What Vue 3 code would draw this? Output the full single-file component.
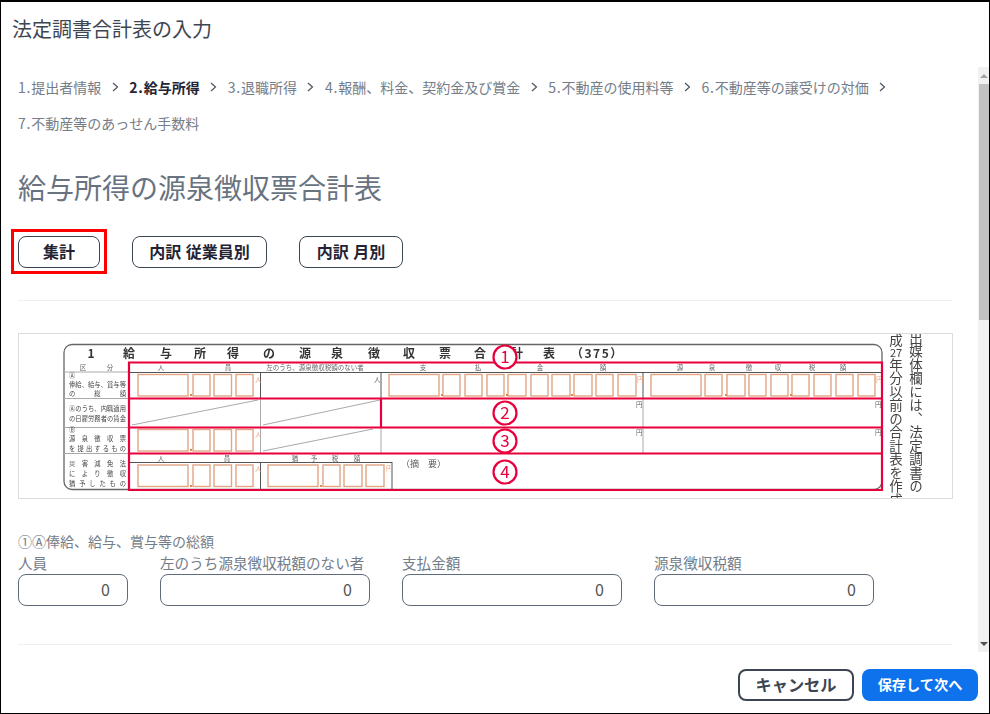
<script setup>
const crumbs = [
  { no: '1.', label: '提出者情報' },
  { no: '2.', label: '給与所得', active: true },
  { no: '3.', label: '退職所得' },
  { no: '4.', label: '報酬、料金、契約金及び賞金' },
  { no: '5.', label: '不動産の使用料等' },
  { no: '6.', label: '不動産等の譲受けの対価' },
  { no: '7.', label: '不動産等のあっせん手数料', last: true }
]
const fields = [
  { label: '人員', size: 'f-s' },
  { label: '左のうち源泉徴収税額のない者', size: 'f-m' },
  { label: '支払金額', size: 'f-l' },
  { label: '源泉徴収税額', size: 'f-l' }
]
const people = [[138, 50], [193, 17], [214, 17.5], [236, 17]]
const pay = [[389, 50], [443, 17], [465, 17], [487, 17], [508, 18], [531, 17], [552, 18], [574, 18], [596, 17], [618, 18]]
const tax = [[651, 50], [705, 17], [727, 18], [749, 17], [771, 17], [792, 17], [814, 17], [836, 17], [858, 17]]
const delay = [[268, 50], [323, 17], [344, 18], [366, 18]]
const boxes = [
  ...people.map(([x, w]) => ({ x, w, y: 374.5, h: 21.5 })),
  ...pay.map(([x, w]) => ({ x, w, y: 374.5, h: 21.5 })),
  ...tax.map(([x, w]) => ({ x, w, y: 374.5, h: 21.5 })),
  ...people.map(([x, w]) => ({ x, w, y: 429.5, h: 21.5 })),
  ...people.map(([x, w]) => ({ x, w, y: 465, h: 21.5 })),
  ...delay.map(([x, w]) => ({ x, w, y: 465, h: 21.5 }))
]
const ticks = [[190, 394], [190, 449], [190, 485], [320, 485], [441, 394], [506, 394], [571, 394], [725, 394], [790, 394]]
const small = [
  ['区', 83, 370], ['分', 110, 370], ['人', 161, 370], ['員', 228, 370],
  ['支', 423, 370], ['払', 478, 370], ['金', 540, 370], ['額', 603, 370],
  ['源', 680, 370], ['泉', 712, 370], ['徴', 749, 370], ['収', 778, 370], ['税', 812, 370], ['額', 843, 370],
  ['人', 161, 461], ['員', 227, 461], ['猶', 295, 461], ['予', 314, 461], ['税', 335, 461], ['額', 357, 461]
]
const circles = [['1', 357], ['2', 413], ['3', 441], ['4', 472]]
const heading = [['1', 91], ['給', 129], ['与', 166], ['所', 200], ['得', 233], ['の', 269], ['源', 305], ['泉', 337], ['徴', 374], ['収', 409], ['票', 445], ['合', 480], ['計', 517], ['表', 549]]
const leftLabels = [
  ['Ⓐ', 69, 378, 7],
  ['俸給、給与、賞与等', 69, 387, 57],
  ['の　総　額', 69, 396, 57],
  ['Ⓐのうち、内職適用', 69, 411, 57],
  ['の日雇労務者の賃金', 69, 421, 57],
  ['Ⓑ', 69, 432, 7],
  ['源泉徴収票', 69, 441, 57],
  ['を提出するもの', 69, 451, 57],
  ['災害減免法', 69, 466, 57],
  ['により徴収', 69, 476, 57],
  ['猶予したもの', 69, 486, 57]
]
</script>

<template>
  <div class="dialog">
    <header class="head">法定調書合計表の入力</header>
    <div class="body">
      <main class="content">
        <nav class="crumbs">
          <template v-for="c in crumbs" :key="c.label">
            <span class="crumb" :class="{ active: c.active }"><span class="no">{{ c.no }}</span>{{ c.label }}</span>
            <span v-if="!c.last" class="sep">
              <svg width="7" height="10" viewBox="0 0 7 10"><path d="M1 1l4.500 4L1 9" fill="none" stroke="#4a5563" stroke-width="1.200" /></svg>
            </span>
          </template>
        </nav>
        <h1 class="title">給与所得の源泉徴収票合計表</h1>
        <div class="tools">
          <button class="tool marked">集計</button>
          <button class="tool wide">内訳 従業員別</button>
          <button class="tool mid">内訳 月別</button>
        </div>
        <hr class="rule rule-top" />
        <div class="figure">
          <svg class="form" width="933" height="164" viewBox="19 334 933 164">
            <g class="blurred">
              <rect x="64" y="344.500" width="818" height="145" rx="8" fill="#fff" stroke="#666" stroke-width="1.300" />
              <g stroke="#aaa" stroke-width="1">
                <path d="M64 372H129M64 398.500H129M64 427.500H129M64 453.500H129" />
                <path d="M129 372V490M260.500 398V453M381 398V453M643 398V453" />
                <path d="M132 425L258 400M263 425L380 400M263 451L373 429" />
              </g>
              <g stroke="#555" stroke-width="1" fill="none">
                <path d="M129 372.500H882M129 462.500H392M260.500 372V398M381 372V398M643 372V398M260.500 462V490M392 462V490" />
              </g>
              <rect v-for="(b, i) in boxes" :key="i" :x="b.x" :y="b.y" :width="b.w" :height="b.h" fill="#fff" stroke="#e3a583" stroke-width="1.400" />
              <rect v-for="(t, i) in ticks" :key="'t' + i" :x="t[0]" :y="t[1]" width="2" height="2" fill="#e08a4a" />
              <text v-for="(s, i) in small" :key="'s' + i" class="tiny" :x="s[1]" :y="s[2]" text-anchor="middle">{{ s[0] }}</text>
              <text class="tiny" x="315" y="370" text-anchor="middle">左のうち、源泉徴収税額のない者</text>
              <text class="tiny yen" x="255" y="382">人</text>
              <text class="tiny yen" x="255" y="437">人</text>
              <text class="tiny yen" x="255" y="471">人</text>
              <text class="tiny yen" x="386" y="471">円</text>
              <text class="tiny yen" x="637" y="382">円</text>
              <text class="tiny yen" x="876" y="382">円</text>
              <text class="tiny" x="374" y="382">人</text>
              <text class="tiny" x="636" y="407">円</text>
              <text class="tiny" x="875" y="407">円</text>
              <text class="tiny" x="636" y="435">円</text>
              <text class="tiny" x="875" y="435">円</text>
              <text v-for="(l, i) in leftLabels" :key="'l' + i" class="side" :x="l[1]" :y="l[2]" :textLength="l[3]" lengthAdjust="spacing">{{ l[0] }}</text>
              <text v-for="(h, i) in heading" :key="'h' + i" class="form-title" :x="h[1]" y="358" text-anchor="middle">{{ h[0] }}</text>
              <text class="form-title" x="571" y="358" letter-spacing="1.500">（375）</text>
              <text class="abstract" x="401" y="467">（摘　要）</text>
              <g fill="none" stroke="#e8003d" stroke-width="2.200">
                <path d="M129 362.500H882V490H129ZM129 398.500H882M381 398V427M129 427.500H882M129 453.500H882M129 362V398M129 427V490" />
              </g>
              <g v-for="c in circles" :key="c[0]">
                <circle cx="505" :cy="c[1]" r="11.500" fill="#fff" stroke="#e8003d" stroke-width="2.200" />
                <text class="num" x="505" :y="c[1] + 6" text-anchor="middle">{{ c[0] }}</text>
              </g>
              <text class="vert" x="896" y="345" text-anchor="middle">成</text>
              <text class="vert v-num" x="896" y="357" text-anchor="middle">27</text>
              <text class="vert v-col" x="896" y="358">年分以前の合計表を作成</text>
              <text class="vert v-col" x="916" y="331">出媒体欄には、法定調書の</text>
            </g>
          </svg>
        </div>
        <p class="group">①Ⓐ俸給、給与、賞与等の総額</p>
        <div class="fields">
          <label v-for="f in fields" :key="f.label" class="field" :class="f.size">
            <span class="label">{{ f.label }}</span>
            <span class="input">0</span>
          </label>
        </div>
        <hr class="rule rule-bottom" />
      </main>
      <aside class="scroll">
        <span class="arrow up"></span>
        <span class="thumb"></span>
        <span class="arrow down"></span>
      </aside>
    </div>
    <footer class="foot">
      <button class="cancel">キャンセル</button>
      <button class="save">保存して次へ</button>
    </footer>
  </div>
</template>

<style>
html, body { margin: 0; background: #fff; }
</style>

<style scoped>
.dialog {
  box-sizing: border-box;
  width: 990px;
  height: 714px;
  border: 1px solid #000;
  border-width: 2px 1px 1px 1px;
  display: flex;
  flex-direction: column;
  background: #fff;
  font-family: "Noto Sans CJK JP", "Noto Sans", sans-serif;
  overflow: hidden;
}
.head {
  height: 65px;
  flex: none;
  box-sizing: border-box;
  padding: 13px 0 0 11px;
  font-size: 20px;
  line-height: 28px;
  color: #3d4651;
}
.body {
  flex: none;
  height: 585px;
  display: flex;
}
.content {
  flex: 1;
  min-width: 0;
  box-sizing: border-box;
  padding: 2px 24px 0 17px;
  overflow: hidden;
}
.crumbs {
  display: flex;
  flex-wrap: wrap;
  align-items: center;
}
.crumb {
  font-size: 14px;
  line-height: 36px;
  color: #747d88;
}
.no { letter-spacing: 0.800px; }
.crumb.active {
  font-weight: 700;
  color: #232333;
}
.sep {
  width: 28px;
  display: flex;
  justify-content: center;
}
.title {
  margin: 26px 0 0;
  font-size: 28px;
  font-weight: 400;
  line-height: 40px;
  color: #68737f;
}
.tools {
  display: flex;
  gap: 32px;
  margin-top: 29px;
}
.tool {
  box-sizing: border-box;
  height: 32px;
  width: 82px;
  padding: 0 0 2px;
  background: #fff;
  border: 1px solid #3c4652;
  border-radius: 8px;
  font: 700 16px "Noto Sans CJK JP", sans-serif;
  word-spacing: 1px;
  color: #232333;
  position: relative;
}
.tool.wide { width: 135px; }
.tool.mid { width: 104px; }
.tool.marked::after {
  content: "";
  position: absolute;
  left: -8px;
  top: -8px;
  width: 96px;
  height: 45px;
  box-sizing: border-box;
  border: 3px solid #f00;
}
.rule {
  border: 0;
  height: 1px;
  background: #edeff1;
  margin: 0;
  width: 934px;
}
.rule-top { margin-top: 32px; }
.rule-bottom { margin-top: 38px; }
.figure {
  box-sizing: border-box;
  width: 935px;
  height: 166px;
  margin-top: 32px;
  border: 1px solid #dcdcdc;
  overflow: hidden;
}
.form { display: block; }
.blurred { filter: blur(0.5px); }
.tiny { font-size: 6.500px; fill: #666; }
.yen { fill: #e3a583; }
.side { font-size: 6.300px; fill: #444; }
.form-title { font-size: 12px; font-weight: 700; fill: #333; }
.abstract { font-size: 9px; fill: #555; }
.num { font-size: 17px; fill: #e8003d; }
.vert { font-size: 13.500px; fill: #444; }
.v-num { font-size: 11px; }
.v-col { writing-mode: vertical-rl; }
.group {
  margin: 33px 0 0;
  font-size: 14px;
  line-height: 18px;
  color: #747d88;
}
.fields {
  display: flex;
  gap: 32px;
  margin-top: 4px;
}
.field { display: block; }
.f-s { width: 110px; }
.f-m { width: 210px; }
.f-l { width: 220px; }
.label {
  display: block;
  font-size: 14.600px;
  line-height: 18px;
  padding-bottom: 2px;
  color: #747d88;
  white-space: nowrap;
}
.input {
  display: block;
  box-sizing: border-box;
  height: 32px;
  border: 1px solid #5f6b7a;
  border-radius: 8px;
  padding-right: 17px;
  text-align: right;
  font-size: 16px;
  line-height: 28px;
  color: #555;
}
.scroll {
  flex: none;
  width: 11px;
  background: #f1f1f1;
  display: flex;
  flex-direction: column;
  align-items: center;
  padding-left: 1px;
  box-sizing: border-box;
  position: relative;
}
.thumb {
  width: 10px;
  height: 236px;
  background: #c1c1c1;
}
.arrow {
  width: 0;
  height: 0;
  border-left: 4px solid transparent;
  border-right: 4px solid transparent;
}
.arrow.up {
  border-bottom: 4px solid #a3a3a3;
  margin: 7px 0 6px;
}
.arrow.down {
  border-top: 4px solid #505050;
  margin-top: auto;
  margin-bottom: 6px;
}
.foot {
  flex: 1;
  display: flex;
  justify-content: flex-end;
  gap: 8px;
  padding: 17px 11px 0 0;
  box-sizing: border-box;
}
.cancel, .save {
  box-sizing: border-box;
  width: 116px;
  height: 32px;
  padding: 0 0 2px;
  border-radius: 8px;
  font-family: "Noto Sans CJK JP", sans-serif;
  font-weight: 700;
}
.cancel {
  background: #fff;
  border: 2px solid #3c4652;
  color: #3c4652;
  font-size: 16.200px;
}
.save {
  background: #0e72ed;
  border: 0;
  color: #fff;
  font-size: 14.200px;
}
</style>
